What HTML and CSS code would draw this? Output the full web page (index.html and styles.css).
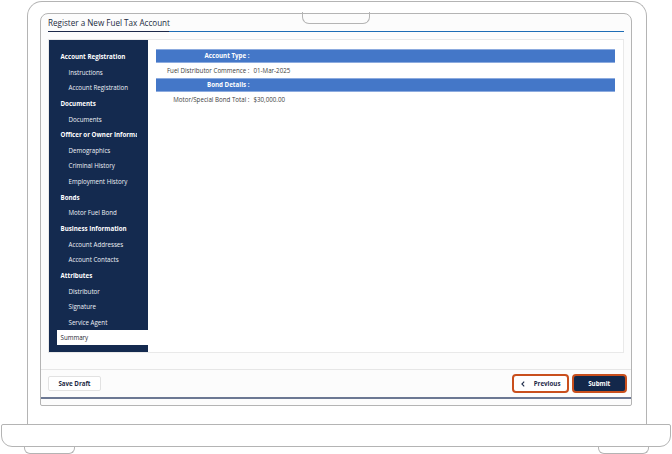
FILE: index.html
```html
<!DOCTYPE html>
<html>
<head>
<meta charset="utf-8">
<link rel="stylesheet" href="styles.css">
</head>
<body>
<div class="laptop">
  <div class="lid">
    <div class="screen">
      <div class="notch"></div>
      <div class="title">Register a New Fuel Tax Account</div>
      <div class="rule"></div>
      <div class="panel">
        <nav class="sidebar">
          <div class="item head">Account Registration</div>
          <div class="item sub">Instructions</div>
          <div class="item sub">Account Registration</div>
          <div class="item head">Documents</div>
          <div class="item sub">Documents</div>
          <div class="item head clip">Officer or Owner Information</div>
          <div class="item sub">Demographics</div>
          <div class="item sub">Criminal History</div>
          <div class="item sub">Employment History</div>
          <div class="item head">Bonds</div>
          <div class="item sub">Motor Fuel Bond</div>
          <div class="item head">Business Information</div>
          <div class="item sub">Account Addresses</div>
          <div class="item sub">Account Contacts</div>
          <div class="item head">Attributes</div>
          <div class="item sub">Distributor</div>
          <div class="item sub">Signature</div>
          <div class="item sub">Service Agent</div>
          <div class="item active">Summary</div>
        </nav>
        <main class="main">
          <div class="row bar"><div class="label">Account Type :</div><div></div></div>
          <div class="row field"><div class="label">Fuel Distributor Commence :</div><div class="value">01-Mar-2025</div></div>
          <div class="row bar"><div class="label">Bond Details :</div><div></div></div>
          <div class="row field"><div class="label">Motor/Special Bond Total :</div><div class="value">$30,000.00</div></div>
        </main>
      </div>
      <div class="sep"></div>
      <div class="footer">
        <button class="btn draft">Save Draft</button>
        <div class="nav-btns">
          <button class="btn prev"><svg class="chev" width="4" height="6" viewBox="0 0 4 6"><path d="M3.2 0.6 L0.9 3 L3.2 5.4" fill="none" stroke="#1c2a48" stroke-width="1.1"/></svg><span>Previous</span></button>
          <button class="btn submit">Submit</button>
        </div>
      </div>
      <div class="darkline"></div>
    </div>
  </div>
  <div class="base"></div>
  <div class="feet"><div class="foot"></div><div class="foot"></div></div>
</div>
</body>
</html>
```
FILE: styles.css
```css
html, body {
  margin: 0;
  padding: 0;
  background: #ffffff;
}
body {
  width: 672px;
  height: 454px;
  overflow: hidden;
  font-family: "Open Sans", "Noto Sans", sans-serif;
}
.laptop {
  padding-top: 1px;
}
.lid {
  margin-left: 27px;
  width: 620px;
  height: 423px;
  box-sizing: border-box;
  border: 1.5px solid #b4b4b4;
  border-bottom: none;
  border-radius: 15px 15px 0 0;
  padding: 10.5px 0 0 11.5px;
}
.screen {
  position: relative;
  width: 592px;
  height: 393px;
  box-sizing: border-box;
  border: 1.5px solid #b4b4b4;
  border-radius: 8px 8px 2px 2px;
  background: #fcfcfc;
  display: flex;
  flex-direction: column;
}
.notch {
  position: absolute;
  left: 261.5px;
  top: -1.5px;
  width: 68px;
  height: 11.5px;
  box-sizing: border-box;
  border: 1.5px solid #b4b4b4;
  border-top: none;
  border-radius: 0 0 7px 7px;
}
.title {
  height: 17px;
  line-height: 17px;
  padding-left: 7.5px;
  font-size: 8.1px;
  color: #222b40;
}
.rule {
  height: 1.5px;
  margin: 0 6.5px 0 7.5px;
  background: linear-gradient(to right, #1d2a4a 0, #1d2a4a 121px, #1e6db5 121px);
}
.panel {
  margin: 7px 6.5px 0 7px;
  height: 314px;
  box-sizing: border-box;
  border: 1px solid #e9e9e9;
  background: #ffffff;
  display: flex;
}
.sidebar {
  width: 99px;
  background: #142a4f;
  padding: 9px 0 0 8px;
  box-sizing: border-box;
}
.item {
  height: 15.65px;
  line-height: 15.65px;
  font-size: 6.2px;
  color: #ffffff;
  white-space: nowrap;
  overflow: hidden;
}
.head {
  font-weight: 700;
  padding-left: 4px;
}
.clip {
  width: 76px;
}
.sub {
  padding-left: 12px;
  color: #eef1f6;
}
.active {
  background: #ffffff;
  color: #1e2530;
  padding-left: 4px;
  margin-top: -0.3px;
  height: 15px;
  line-height: 15px;
}
.main {
  flex: 1;
  padding: 9px 8px 0 8px;
}
.row {
  display: grid;
  grid-template-columns: 94px 1fr;
  column-gap: 4px;
  font-size: 6.2px;
  white-space: nowrap;
}
.label {
  text-align: right;
}
.bar {
  height: 14px;
  line-height: 12px;
  box-sizing: border-box;
  background: #4477c8;
  border-top: 1px solid #8cabdf;
  border-bottom: 1px solid #8cabdf;
  color: #ffffff;
  font-weight: 700;
}
.field {
  height: 15px;
  line-height: 15px;
  color: #404040;
}
.value {
  color: #404040;
}
.sep {
  margin-top: 16px;
  height: 1px;
  background: #e6e6e6;
}
.footer {
  height: 27px;
  display: flex;
  align-items: center;
  justify-content: space-between;
  padding: 0 3.8px 0 7.5px;
}
.btn {
  font-family: "Open Sans", "Noto Sans", sans-serif;
  font-size: 6.2px;
  font-weight: 700;
  margin: 0;
  cursor: pointer;
}
.draft {
  width: 53px;
  height: 15.5px;
  padding: 0;
  background: #ffffff;
  border: 1px solid #e2e2e2;
  border-radius: 2px;
  color: #1c2a44;
}
.nav-btns {
  display: flex;
  gap: 2.4px;
}
.prev {
  width: 57.6px;
  height: 19px;
  padding: 0 0 0 7px;
  background: #ffffff;
  border: 2.5px solid #c94f1d;
  border-radius: 4px;
  color: #1c2a48;
  display: flex;
  align-items: center;
  gap: 9px;
}
.chev {
  display: block;
}
.submit {
  width: 55px;
  height: 19px;
  padding: 0;
  background: #13284b;
  border: 2.5px solid #c94f1d;
  border-radius: 4px;
  color: #ffffff;
}
.darkline {
  height: 1.5px;
  background: #6c7893;
}
.base {
  margin-left: 1px;
  width: 670px;
  height: 23px;
  box-sizing: border-box;
  border: 1.5px solid #b4b4b4;
  border-radius: 2px 2px 11px 11px;
}
.feet {
  display: flex;
  justify-content: space-between;
  padding: 0 23px 0 24px;
}
.foot {
  width: 51px;
  height: 7px;
  box-sizing: border-box;
  border: 1.5px solid #b4b4b4;
  border-top: none;
  border-radius: 0 0 6px 6px;
}
```
